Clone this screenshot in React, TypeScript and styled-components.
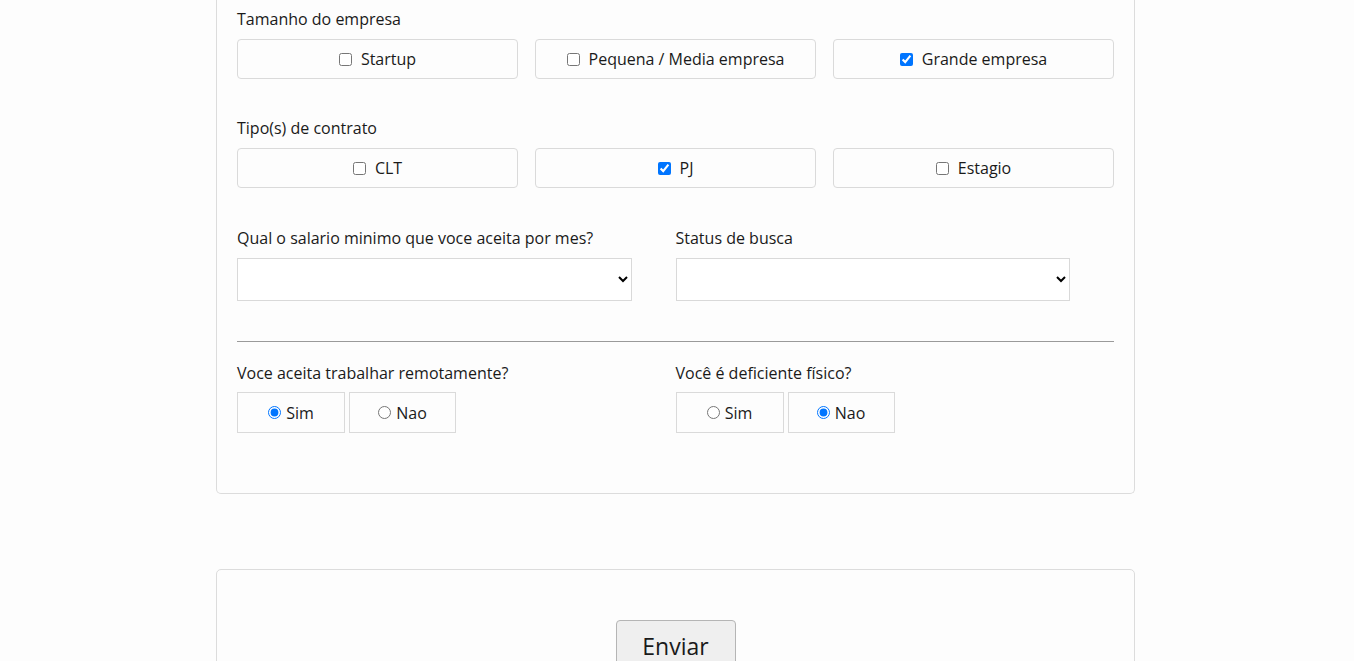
import React from "react";
import styled, { createGlobalStyle } from "styled-components";

const GlobalStyle = createGlobalStyle`
  html, body {
    margin: 0;
    padding: 0;
    background: #fdfdfd;
  }
  body {
    font-family: "Open Sans", "Noto Sans", sans-serif;
    color: #1a1a1a;
    padding-right: 3px;
  }
`;

const Page = styled.div`
  display: flex;
  flex-direction: column;
  align-items: center;
  gap: 75px;
`;

const Card = styled.form<{ open?: boolean }>`
  box-sizing: border-box;
  width: 919px;
  background: #fdfdfd;
  border: 1px solid #dcdcdc;
  border-top: ${(p) => (p.open ? "none" : "1px solid #dcdcdc")};
  border-radius: ${(p) => (p.open ? "0 0 5px 5px" : "5px 5px 0 0")};
  padding: ${(p) => (p.open ? "7px 20px 60px" : "50px 20px 0")};
  display: flex;
  flex-direction: column;
`;

const Label = styled.div<{ mb?: number }>`
  font-size: 16px;
  line-height: 24px;
  margin-bottom: ${(p) => p.mb ?? 8}px;
`;

const Section = styled.div<{ mt?: number }>`
  margin-top: ${(p) => p.mt ?? 0}px;
`;

const OptionGrid = styled.div`
  display: grid;
  grid-template-columns: repeat(3, 1fr);
  column-gap: 17px;
`;

const OptionBox = styled.label`
  box-sizing: border-box;
  height: 40px;
  border: 1px solid #dadada;
  border-radius: 4px;
  display: flex;
  align-items: center;
  justify-content: center;
  gap: 6px;
  font-size: 16px;
  input {
    margin: 0 3px 0 0;
    width: 13px;
    height: 13px;
  }
`;

const TwoCols = styled.div`
  display: grid;
  grid-template-columns: 1fr 1fr;
`;

const Select = styled.select`
  box-sizing: border-box;
  width: 90%;
  height: 43px;
  border: 1px solid #d9d9d9;
  border-radius: 0;
  background: #fff;
  font-family: inherit;
  font-size: 16px;
`;

const Rule = styled.hr`
  border: none;
  border-top: 1px solid #9a9a9a;
  margin: 40px 0 19px;
`;

const RadioRow = styled.div`
  display: flex;
  gap: 4px;
`;

const RadioBox = styled.label<{ w: number }>`
  box-sizing: border-box;
  width: ${(p) => p.w}px;
  height: 41px;
  border: 1px solid #dadada;
  display: flex;
  align-items: center;
  justify-content: center;
  gap: 3px;
  font-size: 16px;
  input {
    margin: 0 2px 0 0;
    width: 13px;
    height: 13px;
  }
`;

const SubmitButton = styled.button`
  box-sizing: border-box;
  align-self: center;
  width: 120px;
  height: 48px;
  background: #efefef;
  border: 1px solid #b5b5b5;
  border-radius: 4px;
  font-family: inherit;
  font-size: 23px;
  line-height: 50px;
  color: #1a1a1a;
  padding: 0;
`;

type Opt = { text: string; checked?: boolean };

function CheckGroup({ title, options, mt }: { title: string; options: Opt[]; mt?: number }) {
  return (
    <Section mt={mt}>
      <Label>{title}</Label>
      <OptionGrid>
        {options.map((o) => (
          <OptionBox key={o.text}>
            <input type="checkbox" defaultChecked={o.checked} />
            {o.text}
          </OptionBox>
        ))}
      </OptionGrid>
    </Section>
  );
}

function RadioGroup({ title, name, yes }: { title: string; name: string; yes: boolean }) {
  return (
    <div>
      <Label mb={7}>{title}</Label>
      <RadioRow>
        <RadioBox w={108}>
          <input type="radio" name={name} defaultChecked={yes} />
          Sim
        </RadioBox>
        <RadioBox w={107}>
          <input type="radio" name={name} defaultChecked={!yes} />
          Nao
        </RadioBox>
      </RadioRow>
    </div>
  );
}

export default function App() {
  return (
    <>
      <GlobalStyle />
      <Page>
        <Card open>
          <CheckGroup
            title="Tamanho do empresa"
            options={[
              { text: "Startup" },
              { text: "Pequena / Media empresa" },
              { text: "Grande empresa", checked: true },
            ]}
          />
          <CheckGroup
            mt={37}
            title="Tipo(s) de contrato"
            options={[{ text: "CLT" }, { text: "PJ", checked: true }, { text: "Estagio" }]}
          />
          <Section mt={38}>
            <TwoCols>
              <div>
                <Label>Qual o salario minimo que voce aceita por mes?</Label>
                <Select defaultValue="">
                  <option value=""></option>
                </Select>
              </div>
              <div>
                <Label>Status de busca</Label>
                <Select defaultValue="">
                  <option value=""></option>
                </Select>
              </div>
            </TwoCols>
          </Section>
          <Rule />
          <TwoCols>
            <RadioGroup title="Voce aceita trabalhar remotamente?" name="remoto" yes />
            <RadioGroup title="Você é deficiente físico?" name="deficiente" yes={false} />
          </TwoCols>
        </Card>
        <Card>
          <SubmitButton type="submit">Enviar</SubmitButton>
        </Card>
      </Page>
    </>
  );
}
